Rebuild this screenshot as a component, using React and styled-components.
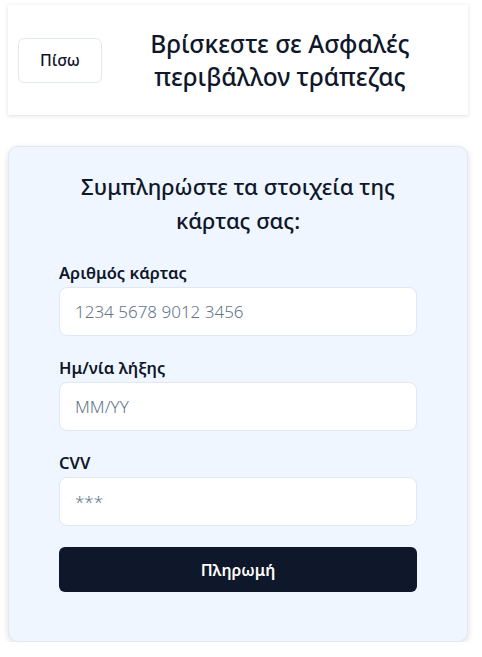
import styled, { createGlobalStyle } from "styled-components";

const GlobalStyle = createGlobalStyle`
  body {
    margin: 0;
    background: #ffffff;
    font-family: "Noto Sans", "Open Sans", sans-serif;
    color: #0f172a;
  }
`;

const Page = styled.div`
  width: 460px;
  padding: 5px 0 0 8px;
  display: flex;
  flex-direction: column;
  gap: 31px;
`;

const Header = styled.header`
  height: 110px;
  box-sizing: border-box;
  background: #ffffff;
  box-shadow: 0 1px 4px rgba(15, 23, 42, 0.14);
  display: flex;
  align-items: center;
  padding: 0 10px;
`;

const BackButton = styled.button`
  width: 84px;
  height: 45px;
  background: #ffffff;
  border: 1px solid #e2e8f0;
  border-radius: 6px;
  font-family: inherit;
  font-size: 16px;
  font-weight: 500;
  color: #0f172a;
`;

const Title = styled.h1`
  flex: 1;
  margin: 0;
  text-align: center;
  font-size: 24.5px;
  font-weight: 500;
  line-height: 33px;
`;

const Card = styled.section`
  height: 496px;
  box-sizing: border-box;
  background: #eff6ff;
  border: 1px solid #e2e8f0;
  border-radius: 10px;
  box-shadow: 0 2px 6px rgba(15, 23, 42, 0.14);
  padding: 22px 0 0;
  display: flex;
  flex-direction: column;
  align-items: center;
`;

const Heading = styled.h2`
  margin: 0 0 25px;
  width: 330px;
  text-align: center;
  font-size: 22px;
  font-weight: 500;
  line-height: 34px;
`;

const Form = styled.form`
  width: 358px;
  display: flex;
  flex-direction: column;
`;

const Field = styled.label`
  display: flex;
  flex-direction: column;
  gap: 3px;
  margin-bottom: 21px;
`;

const LabelText = styled.span`
  font-size: 16.5px;
  font-weight: 600;
  line-height: 22px;
`;

const Input = styled.input`
  height: 49px;
  box-sizing: border-box;
  border: 1px solid #e2e8f0;
  border-radius: 8px;
  background: #ffffff;
  padding: 0 15px;
  font-family: inherit;
  font-size: 17px;
  outline: none;
  &::placeholder {
    color: #64748b;
    font-weight: 300;
  }
`;

const PayButton = styled.button`
  height: 45px;
  border: none;
  border-radius: 6px;
  background: #0f172a;
  color: #ffffff;
  font-family: inherit;
  font-size: 16px;
  font-weight: 600;
`;

export default function App() {
  return (
    <>
      <GlobalStyle />
      <Page>
        <Header>
          <BackButton type="button">Πίσω</BackButton>
          <Title>
            Βρίσκεστε σε Ασφαλές
            <br />
            περιβάλλον τράπεζας
          </Title>
        </Header>
        <Card>
          <Heading>Συμπληρώστε τα στοιχεία της κάρτας σας:</Heading>
          <Form onSubmit={(e) => e.preventDefault()}>
            <Field>
              <LabelText>Αριθμός κάρτας</LabelText>
              <Input placeholder="1234 5678 9012 3456" />
            </Field>
            <Field>
              <LabelText>Ημ/νία λήξης</LabelText>
              <Input placeholder="MM/YY" />
            </Field>
            <Field>
              <LabelText>CVV</LabelText>
              <Input placeholder="***" />
            </Field>
            <PayButton type="submit">Πληρωμή</PayButton>
          </Form>
        </Card>
      </Page>
    </>
  );
}
